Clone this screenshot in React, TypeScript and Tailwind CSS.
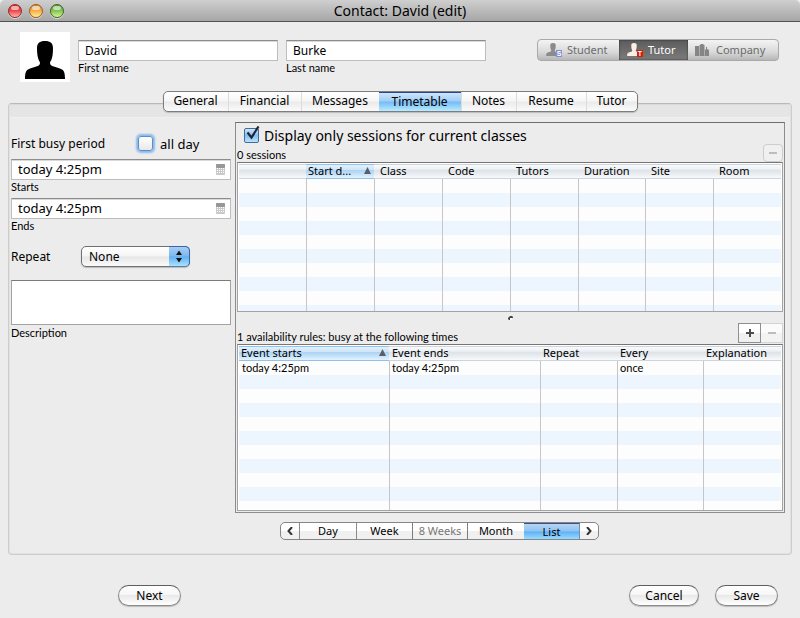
import type { ReactNode } from "react";

const SMALL = "font-['Lato','Noto_Sans',sans-serif] text-[11px] leading-[14px]";
const FIELD =
  "border border-[#bdbdbd] border-t-[#8c8c8c] bg-white shadow-[inset_0_1px_0_#d9d9d9]";

function Silhouette({ className }: { className?: string }) {
  return (
    <svg viewBox="0 0 40 38" className={className} fill="currentColor" aria-hidden="true">
      <path d="M20 0c5.500 0 8 2.500 8 7 0 5-.5 9-1.500 11.500-.5 1.500-1.500 2.300-1.500 3.500 0 1.500 1 2.500 3 3.300 3 1.200 6.500 1.700 9 3.200 2.300 1.500 3 4 3 9.500H0c0-5.500.7-8 3-9.500 2.500-1.500 6-2 9-3.200 2-.8 3-1.800 3-3.300 0-1.200-1-2-1.500-3.500C12.500 16 12 12 12 7c0-4.500 2.500-7 8-7z" />
    </svg>
  );
}

function RoleIcon({ letter, body, badge }: { letter: string; body: string; badge: string }) {
  return (
    <span className="relative flex h-[14px] w-4">
      <Silhouette className={"h-[13px] w-[14px] " + body} />
      <span
        className={
          "absolute right-0 bottom-0 flex h-[7px] w-[6px] items-center justify-center font-['Liberation_Sans',sans-serif] text-[7px] leading-[7px] font-bold text-white " +
          badge
        }
        aria-hidden="true"
      >
        {letter}
      </span>
    </span>
  );
}

function CompanyIcon() {
  return (
    <svg viewBox="0 0 14 13" className="h-[13px] w-[14px]" fill="#858585" aria-hidden="true">
      <path d="M0 2h4v10H0zM4.500 1h1V0h3v1h1v11h-5zM10 6l1-1V3h1v2l2 1v6h-4z" />
    </svg>
  );
}

function CalendarIcon() {
  return (
    <svg viewBox="0 0 9 11" className="h-[11px] w-[9px]" aria-hidden="true">
      <rect x="0" y="0" width="9" height="11" rx="1" fill="#c9c9c9" />
      <rect x="0" y="0" width="9" height="4" rx="1" fill="#979797" />
      <path
        d="M1 4h1v1H1zM3 4h1v1H3zM5 4h1v1H5zM7 4h1v1H7zM1 6h1v1H1zM3 6h1v1H3zM5 6h1v1H5zM7 6h1v1H7zM1 8h1v1H1zM3 8h1v1H3zM5 8h1v1H5zM7 8h1v1H7z"
        fill="#ffffff"
      />
    </svg>
  );
}

function NameField({ id, label, value }: { id: string; label: string; value: string }) {
  return (
    <div className="flex w-[200px] flex-col">
      <input
        id={id}
        defaultValue={value}
        className={"h-[21px] w-full px-[6px] pb-px text-[12px] leading-4 outline-none " + FIELD}
      />
      <label htmlFor={id} className={SMALL}>
        {label}
      </label>
    </div>
  );
}

function DateField({ id, label }: { id: string; label: string }) {
  return (
    <div className="flex h-[39px] flex-col">
      <div className={"flex h-[21px] items-center pr-[5px] pb-px " + FIELD}>
        <input
          id={id}
          defaultValue="today 4:25pm"
          className="h-4 min-w-0 flex-1 bg-transparent px-[6px] text-[13px] leading-4 outline-none"
        />
        <button type="button" aria-label="Pick a date">
          <CalendarIcon />
        </button>
      </div>
      <label htmlFor={id} className={SMALL}>
        {label}
      </label>
    </div>
  );
}

function Pill({ children, className }: { children: ReactNode; className: string }) {
  return (
    <button
      type="button"
      className={
        "h-[21px] rounded-full border border-[#8a8a8a] border-t-[#5e5e5e] bg-[linear-gradient(#ffffff,#f6f6f6_45%,#e9e9e9_50%,#ffffff)] text-[12px] leading-4 shadow-[0_1px_1px_#bdbdbd] " +
        className
      }
    >
      {children}
    </button>
  );
}

type Column = { label: string; width: string; sorted?: boolean };

function DataTable({
  columns,
  cells,
  rows,
  lastRow,
  pad,
}: {
  columns: Column[];
  cells: string[];
  rows: number;
  lastRow: string;
  pad: string;
}) {
  return (
    <div className="border border-[#a3a3a3] border-t-[#757575] bg-white p-px pb-0 pr-[2px]">
      <table className="w-full table-fixed border-separate border-spacing-0">
        <colgroup>
          {columns.map((c, i) => (
            <col key={i} className={c.width} />
          ))}
        </colgroup>
        <thead>
          <tr className="bg-[linear-gradient(#fbfcfd,#eef1f4_35%,#dde2e7_40%,#e6eaee_60%,#fbfcfd)]">
            {columns.map((c, i) => (
              <th
                key={i}
                scope="col"
                className={
                  "h-[15px] border-y p-0 pb-[2px] text-left text-[11px] leading-[11px] font-normal " +
                  (c.sorted
                    ? "border-[#8fc3ee] bg-[linear-gradient(#e2f0fc,#cfe5f8_35%,#acd3f4_40%,#bcdcf6_60%,#e4f3fd)] "
                    : "border-[#ccd4de] ")
                }
              >
                <span className={"flex items-center justify-between " + (c.sorted ? "pr-[3px] pl-[2px]" : pad)}>
                  <span className="whitespace-nowrap">{c.label}</span>
                  {c.sorted && (
                    <svg viewBox="0 0 7 7" className="size-[7px] shrink-0" aria-hidden="true">
                      <path d="M3.500 0L7 7H0z" fill="#585f68" />
                    </svg>
                  )}
                </span>
              </th>
            ))}
          </tr>
        </thead>
        <tbody>
          {Array.from({ length: rows }, (_, r) => (
            <tr key={r} className={r % 2 ? "bg-[#edf5fe]" : "bg-[#fdfdfd]"}>
              {columns.map((_, i) => (
                <td
                  key={i}
                  className={
                    "p-0 " +
                    (r === rows - 1 ? lastRow : "h-[14px]") +
                    " " +
                    SMALL +
                    (i > 0 ? " border-l border-[#c6c6c6] pl-[2px]" : " pl-[3px]")
                  }
                >
                  {r === 0 ? cells[i] : null}
                </td>
              ))}
            </tr>
          ))}
        </tbody>
      </table>
    </div>
  );
}

const TABS = [
  { label: "General", width: "w-[64px]" },
  { label: "Financial", width: "w-[73px]" },
  { label: "Messages", width: "w-[78px]" },
  { label: "Timetable", width: "w-[82px]" },
  { label: "Notes", width: "w-[55px]" },
  { label: "Resume", width: "w-[70px]" },
  { label: "Tutor", width: "w-[51px]" },
];

const SESSIONS: Column[] = [
  { label: "", width: "w-[67px]" },
  { label: "Start d...", width: "w-[68px]", sorted: true },
  { label: "Class", width: "w-[68px]" },
  { label: "Code", width: "w-[68px]" },
  { label: "Tutors", width: "w-[68px]" },
  { label: "Duration", width: "w-[67px]" },
  { label: "Site", width: "w-[68px]" },
  { label: "Room", width: "w-[68px]" },
];

const RULES: Column[] = [
  { label: "Event starts", width: "w-[150px]", sorted: true },
  { label: "Event ends", width: "w-[151px]" },
  { label: "Repeat", width: "w-[77px]" },
  { label: "Every", width: "w-[86px]" },
  { label: "Explanation", width: "w-[78px]" },
];

const VIEWS = ["Day", "Week", "8 Weeks", "Month", "List"];

function viewStyle(view: string) {
  if (view === "List")
    return "border-t border-r border-t-[#3f4f8c] border-r-[#6f8fb5] bg-[linear-gradient(#b5d5f3,#8fc3f3_48%,#5eb0f5_52%,#9adcff)]";
  if (view === "8 Weeks") return "border-x border-[#7d7d7d] text-[#777777]";
  if (view === "Week") return "border-l border-[#8a8a8a]";
  return "";
}

function Chevron({ d }: { d: string }) {
  return (
    <svg viewBox="0 0 6 8" className="h-2 w-[6px]" fill="none" stroke="#333333" strokeWidth="2" aria-hidden="true">
      <path d={d} />
    </svg>
  );
}

function Lamp({ label, color }: { label: string; color: string }) {
  return (
    <button
      type="button"
      aria-label={label}
      className={"flex size-[14px] justify-center rounded-full border pt-px shadow-[0_1px_0_#d8d8d8] " + color}
    >
      <span className="h-1 w-2 rounded-full bg-white/60" />
    </button>
  );
}

export default function App() {
  return (
    <div className="flex min-h-screen flex-col bg-[#ececec] font-['Noto_Sans',sans-serif] text-[12px] leading-4 text-black">
      <header className="grid h-[22px] grid-cols-[1fr_auto_1fr] items-center rounded-t-[5px] border-b border-[#515151] bg-[linear-gradient(#cfcfcf,#a6a6a6)] px-2">
        <div className="flex gap-[7px]">
          <Lamp label="Close" color="border-[#8f2b2b] bg-[linear-gradient(#d22c2c,#f14a4a_50%,#ffb3b3)]" />
          <Lamp label="Minimize" color="border-[#9c5a24] bg-[linear-gradient(#d9802c,#f6b04e_50%,#fff08e)]" />
          <Lamp label="Zoom" color="border-[#3c6a24] bg-[linear-gradient(#4d9431,#86c556_50%,#d6f794)]" />
        </div>
        <h1 className="text-[14px]">Contact: David (edit)</h1>
      </header>

      <section className="flex items-start pt-[10px] pr-[21px] pl-5">
        <div className="flex size-[50px] items-end justify-center bg-white pb-[3px]">
          <Silhouette className="h-[38px] w-10" />
        </div>
        <div className="flex gap-2 pt-2 pl-2">
          <NameField id="first" label="First name" value="David" />
          <NameField id="last" label="Last name" value="Burke" />
        </div>
        <div className="mt-[7px] ml-auto flex h-[22px] items-stretch overflow-hidden rounded-[4px] border border-[#a9a9a9] bg-[linear-gradient(#f4f4f4,#d9d9d9_60%,#b7b7b7)] text-[11px] text-[#6b6b6b]">
          <button type="button" className="flex w-[81px] items-center gap-[5px] pl-2">
            <RoleIcon letter="S" body="text-[#8b8b8b]" badge="bg-[#7f91d6]" />
            Student
          </button>
          <button
            type="button"
            className="flex w-[69px] items-center gap-[5px] bg-[linear-gradient(#5c5c5c,#7b7b7b)] pl-2 text-white shadow-[inset_0_0_2px_#222222]"
          >
            <RoleIcon letter="T" body="text-[#fbeee2]" badge="bg-[#d81e05]" />
            Tutor
          </button>
          <button type="button" className="flex w-[90px] items-center gap-[7px] pl-[7px]">
            <CompanyIcon />
            Company
          </button>
        </div>
      </section>

      <nav className="relative z-10 mt-[9px] -mb-[9px] flex justify-center">
        <div className="flex h-[21px] overflow-hidden rounded-[5px] border border-[#7d7d7d] bg-[linear-gradient(#ffffff,#f6f6f6_48%,#eaeaea_52%,#fbfbfb)] shadow-[0_1px_1px_#bbbbbb]">
          {TABS.map((t, i) => (
            <button
              key={t.label}
              type="button"
              className={
                "pb-px " +
                t.width +
                (t.label === "Timetable"
                  ? " border-t border-[#23479c] bg-[linear-gradient(#cfe5f9,#9fcdf7_45%,#74bbf6_50%,#b9ecff)]"
                  : i > 0
                    ? " border-l border-[#dcdcdc]"
                    : "")
              }
            >
              {t.label}
            </button>
          ))}
        </div>
      </nav>

      <main className="mx-2 flex flex-col rounded-[4px] border border-[#cdcdcd] border-t-[#b9b9b9] pb-[14px] shadow-[inset_0_0_0_1px_#e1e1e1]">
        <div className="mx-px h-[14px] border-t border-b border-t-[#dadada] border-b-[#f0f0f0] bg-[#e5e5e5]" />
        <div className="flex gap-1 pt-1 pr-[6px] pl-[2px]">
          <form className="flex w-[220px] shrink-0 flex-col">
            <div className="flex h-[37px] items-end pb-[7px]">
              <span className="w-[127px]">First busy period</span>
              <input
                id="allday"
                type="checkbox"
                className="mb-px size-[15px] appearance-none rounded-[3px] border border-[#5b8fc9] bg-[linear-gradient(#ffffff,#e8e8e8)] shadow-[0_0_2px_2px_#8ab9ea]"
              />
              <label htmlFor="allday" className="pl-[7px] text-[13px]">
                all day
              </label>
            </div>
            <DateField id="starts" label="Starts" />
            <DateField id="ends" label="Ends" />
            <div className="flex h-[43px] items-center pt-2 pb-3">
              <label htmlFor="repeat" className="w-[70px] pt-px">
                Repeat
              </label>
              <div className="relative flex h-[21px] w-[109px]">
                <select
                  id="repeat"
                  defaultValue="None"
                  className="w-full appearance-none rounded-[5px] border border-[#6f6f6f] bg-[linear-gradient(#ffffff,#f4f4f4_48%,#e6e6e6_52%,#fbfbfb)] pl-[7px] text-[12px] leading-4 shadow-[0_1px_1px_#bbbbbb]"
                >
                  <option>None</option>
                </select>
                <span className="pointer-events-none absolute inset-y-0 right-0 flex w-[21px] items-center justify-center rounded-r-[5px] border border-l-0 border-[#3a62ad] border-b-[#5f7f9f] bg-[linear-gradient(#a9cdf1,#7ab8f0_48%,#62aef0_52%,#a8e4ff)]">
                  <svg viewBox="0 0 6 13" className="h-[13px] w-[6px]" fill="#111111" aria-hidden="true">
                    <path d="M3 0.500L6 5H0zM0 8h6L3 12.500z" />
                  </svg>
                </span>
              </div>
            </div>
            <textarea
              id="description"
              className="h-[45px] w-full resize-none border border-[#a3a3a3] border-t-[#7a7a7a] bg-white outline-none"
            />
            <label htmlFor="description" className={SMALL + " pt-px"}>
              Description
            </label>
          </form>

          <section className="min-w-0 flex-1 border border-[#8c8c8c] border-t-[#6e6e6e] p-px pt-0">
            <div className="flex h-[39px] items-end justify-between">
              <div className="flex flex-col">
                <div className="flex h-[25px] items-center pl-[7px]">
                  <span className="relative flex size-[15px]">
                    <input
                      id="current"
                      type="checkbox"
                      defaultChecked
                      className="size-[15px] appearance-none rounded-[2px] border border-[#46699c] bg-[linear-gradient(#cfe4f8,#86bdf0_50%,#b5e6ff)]"
                    />
                    <svg
                      viewBox="0 0 16 16"
                      className="pointer-events-none absolute -top-[2px] left-0 size-4"
                      fill="none"
                      stroke="#1c2536"
                      strokeWidth="2.200"
                      aria-hidden="true"
                    >
                      <path d="M3.500 6.500L7.500 11.500L14.500 0.500" />
                    </svg>
                  </span>
                  <label htmlFor="current" className="pl-[5px] text-[14px]">
                    Display only sessions for current classes
                  </label>
                </div>
                <p className={SMALL}>0 sessions</p>
              </div>
              <button
                type="button"
                aria-label="Remove session"
                className="flex h-[18px] w-5 items-center justify-center rounded-[4px] border border-[#cdcdcd] bg-[#f0f0f0]"
              >
                <span className="h-[2px] w-2 bg-[#bdbdbd]" />
              </button>
            </div>
            <DataTable columns={SESSIONS} cells={[]} rows={10} lastRow="h-[6px] text-[0px]" pad="pl-[6px]" />
            <div className="flex h-[11px] items-center justify-center">
              <svg viewBox="0 0 5 4" className="h-1 w-[5px]" aria-hidden="true">
                <path d="M0 2L1 1L2 0H4L5 1V2H2V4H1L0 3z" fill="#444444" />
                <path d="M2 2h2v2H2z" fill="#ffffff" />
              </svg>
            </div>
            <div className="flex h-[21px] justify-between">
              <p className={SMALL + " self-end"}>1 availability rules: busy at the following times</p>
              <div className="flex h-5">
                <button
                  type="button"
                  aria-label="Add rule"
                  className="flex w-[23px] items-center justify-center border border-[#8f8f8f] bg-[linear-gradient(#ffffff_50%,#f0f0f0_50%)]"
                >
                  <svg viewBox="0 0 8 8" className="size-2" fill="#4c4c4c" aria-hidden="true">
                    <path d="M3 0h2v3h3v2H5v3H3V5H0V3h3z" />
                  </svg>
                </button>
                <button
                  type="button"
                  aria-label="Remove rule"
                  className="flex w-[22px] items-center justify-center border border-l-0 border-[#d4d4d4] bg-[linear-gradient(#fbfbfb_50%,#f3f3f3_50%)]"
                >
                  <span className="h-[2px] w-2 bg-[#bdbdbd]" />
                </button>
              </div>
            </div>
            <DataTable
              columns={RULES}
              cells={["today 4:25pm", "today 4:25pm", "", "once", ""]}
              rows={11}
              lastRow="h-[9px] text-[0px]"
              pad="pl-[3px]"
            />
          </section>
        </div>

        <div className="mt-[9px] flex pl-[271px] text-[11px]">
          <div className="flex h-[18px] overflow-hidden rounded-[5px] border border-[#858585] bg-[linear-gradient(#ffffff_50%,#f0f0f0_50%)]">
            <button type="button" aria-label="Previous" className="flex w-[19px] items-center justify-center border-r border-[#8a8a8a]">
              <Chevron d="M5 0L1.500 4L5 8" />
            </button>
            {VIEWS.map((v) => (
              <button key={v} type="button" className={"w-14 " + viewStyle(v)}>
                {v}
              </button>
            ))}
            <button type="button" aria-label="Next period" className="flex w-[18px] items-center justify-center">
              <Chevron d="M1 0L4.500 4L1 8" />
            </button>
          </div>
        </div>
      </main>

      <footer className="flex pt-[30px] pr-[22px] pb-3 pl-[118px]">
        <Pill className="w-[63px]">Next</Pill>
        <Pill className="mr-4 ml-auto w-[70px]">Cancel</Pill>
        <Pill className="w-[63px]">Save</Pill>
      </footer>
    </div>
  );
}
